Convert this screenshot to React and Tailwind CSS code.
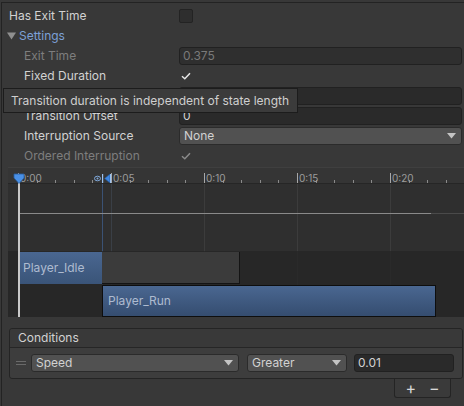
import React from "react";

const TICK = 18.6;
const ticks = Array.from({ length: 25 }, (_, i) => i);

const Check = ({ dim }) => (
    <svg width="10" height="8" viewBox="0 0 10 8" className="block">
        <path d="M1 4.2 L3.8 6.8 L9 1.2" fill="none" stroke={dim ? "#8a8a8a" : "#e6e6e6"} strokeWidth="1.5" />
    </svg>
);

const Row = ({ label, indent, dim, children }) => (
    <div className="flex h-5 items-center">
        <div className={`w-[170px] flex-none ${indent ? "pl-[15px]" : ""} ${dim ? "text-[#7e7e7e]" : ""}`}>{label}</div>
        <div className="flex-1 flex items-center">{children}</div>
    </div>
);

const Field = ({ value, dim }) => (
    <div className={`h-[18px] w-full rounded-[3px] border border-[#212121] bg-[#2a2a2a] px-[3px] flex items-center ${dim ? "text-[#7a7a7a] bg-[#2f2f2f]" : ""}`}>
        {value}
    </div>
);

const Box = ({ checked, dim }) => (
    <div className={`w-[14px] h-[14px] rounded-[2px] flex items-center justify-center ${checked ? "" : "border border-[#232323] bg-[#2e2e2e]"}`}>
        {checked && <Check dim={dim} />}
    </div>
);

const Arrow = () => (
    <svg width="9" height="6" viewBox="0 0 9 6"><path d="M0 0 H9 L4.5 5.5 Z" fill="#c4c4c4" /></svg>
);

const Dropdown = ({ value, className }) => (
    <div className={`h-[18px] rounded-[3px] border border-[#2b2b2b] bg-[#515151] pl-[4px] pr-[5px] flex items-center justify-between ${className}`}>
        <span>{value}</span>
        <Arrow />
    </div>
);

export default function App() {
    return (
        <div className="relative w-[464px] h-[406px] overflow-hidden bg-[#383838] text-[12px] text-[#d2d2d2] font-['Inter',sans-serif] leading-none">
            <div className="mt-[2px] ml-[1px] border-t border-l border-[#232323] h-[404px]">
                {/* inspector fields */}
                <div className="pt-[3px] pl-[7px] pr-[2px]">
                    <Row label="Has Exit Time">
                        <Box />
                    </Row>
                    <div className="flex h-5 items-center -ml-[2px] text-[#7ca0d6]">
                        <svg width="9" height="8" viewBox="0 0 9 8" className="mr-[3px]"><path d="M0 0.5 H9 L4.5 7.5 Z" fill="#8f8f8f" /></svg>
                        Settings
                    </div>
                    <Row label="Exit Time" indent dim>
                        <Field value="0.375" dim />
                    </Row>
                    <Row label="Fixed Duration" indent>
                        <Box checked />
                    </Row>
                    {/* transition duration row, covered by the tooltip */}
                    <Row label="" indent>
                        <Field value="" />
                    </Row>
                    <Row label="Transition Offset" indent>
                        <Field value="0" />
                    </Row>
                    <Row label="Interruption Source" indent>
                        <Dropdown value="None" className="w-full" />
                    </Row>
                    <Row label="Ordered Interruption" indent dim>
                        <Box checked dim />
                    </Row>
                </div>

                {/* timeline */}
                <div className="relative mt-[1px] ml-[6px] h-[150px] bg-[#2f2f2f] overflow-hidden">
                    <div className="relative h-[17px] bg-[#353535] border-t border-[#3f3f3f] border-b border-b-[#262626]">
                        {ticks.map((i) => {
                            const major = i % 5 === 0;
                            return (
                                <div
                                    key={i}
                                    className={`absolute bottom-0 w-px ${major ? "h-[10px] bg-[#a8a8a8]" : "h-[3px] bg-[#8a8a8a]"}`}
                                    style={{ left: 10 + i * TICK }}
                                />
                            );
                        })}
                        {["0:00", "0:05", "0:10", "0:15", "0:20"].map((t, i) => (
                            <span key={t} className="absolute top-[5px] text-[10px] text-[#9c9c9c]" style={{ left: 12 + i * 5 * TICK }}>
                                {t}
                            </span>
                        ))}
                    </div>

                    {/* grid lines behind the clips */}
                    {[2, 3, 4].map((m) => (
                        <div key={m} className="absolute top-[17px] bottom-0 w-px bg-[#3c3c3c]" style={{ left: 10 + m * 5 * TICK }} />
                    ))}
                    <div className="absolute top-[17px] bottom-0 w-px bg-[#3a3f46]" style={{ left: 10 + 5 * TICK }} />
                    <div className="absolute top-[17px] bottom-0 left-[94px] w-px bg-[#3b5274]" />

                    <div className="relative h-[67px]">
                        <div className="absolute top-[29px] left-[10px] w-[413px] h-px bg-[#8a8a8a]" />
                        <div className="absolute top-[29px] left-[423px] w-[40px] h-px bg-[#4a4a4a]" />
                    </div>
                    <div className="relative h-[66px] bg-[#262626]/80 pt-px">
                        <div className="flex h-[33px] pl-[10px]">
                            <div className="relative w-[84px] h-[32px] bg-gradient-to-b from-[#4a6791] to-[#3a5478] flex items-center pl-[5px] text-[#aebbd0]">Player_Idle</div>
                            <div className="relative w-[138px] h-[32px] bg-[#3b3b3b] border-r border-b border-[#141414]" />
                        </div>
                        <div className="flex h-[32px] pl-[94px]">
                            <div className="relative w-[334px] h-[32px] bg-gradient-to-b from-[#4a6791] to-[#354d70] border border-[#0e0e0e] flex items-center pl-[5px] text-[#aebbd0]">Player_Run</div>
                        </div>
                    </div>

                    {/* playhead and markers */}
                    <div className="absolute top-[10px] bottom-0 left-[10px] w-[2px] bg-[#c8c8c8]" />
                    <svg className="absolute top-[6px] left-[5px]" width="12" height="11" viewBox="0 0 12 11">
                        <path d="M1 1 H11 V5 L6 10.5 L1 5 Z" fill="#4a90e6" stroke="#2a5ea0" strokeWidth="0.8" />
                    </svg>
                    <svg className="absolute top-[6px] left-[86px]" width="18" height="11" viewBox="0 0 18 11">
                        <ellipse cx="3.5" cy="5.5" rx="3" ry="2.3" fill="none" stroke="#7fa8da" strokeWidth="1" />
                        <circle cx="3.5" cy="5.5" r="1" fill="#7fa8da" />
                        <rect x="8" y="1" width="1.2" height="9" fill="#9cc2f0" />
                        <path d="M16 1 V10 L10.5 5.5 Z" fill="#3f86e0" stroke="#1d4f8f" strokeWidth="0.6" />
                        <rect x="16" y="1" width="1.2" height="9" fill="#9cc2f0" />
                    </svg>
                </div>

                {/* conditions */}
                <div className="mt-[11px] ml-[7px] mr-[1px] rounded-[3px] border border-[#242424]">
                    <div className="h-[19px] flex items-center pl-[8px] bg-[#393939] border-b border-[#262626] rounded-t-[3px]">Conditions</div>
                    <div className="h-[30px] flex items-center bg-[#3d3d3d] rounded-b-[3px] pr-[8px]">
                        <div className="w-[21px] flex flex-col items-center gap-[2px] pl-[1px]">
                            <div className="w-[10px] h-px bg-[#6a6a6a]" />
                            <div className="w-[10px] h-px bg-[#6a6a6a]" />
                        </div>
                        <Dropdown value="Speed" className="w-[208px]" />
                        <Dropdown value="Greater" className="w-[100px] ml-[8px]" />
                        <div className="ml-[7px] flex-1 h-[18px] rounded-[3px] border border-[#212121] bg-[#2a2a2a] pl-[3px] flex items-center">0.01</div>
                    </div>
                </div>
                <div className="flex justify-end mr-[13px]">
                    <div className="w-[57px] h-[19px] border border-t-0 border-[#242424] rounded-b-[3px] bg-[#3a3a3a] flex items-center justify-center gap-[13px] text-[16px] text-[#d8d8d8]">
                        <span>+</span>
                        <span>−</span>
                    </div>
                </div>
            </div>

            {/* tooltip */}
            <div className="absolute left-[3px] top-[88px] w-[295px] h-[25px] border border-[#1c1c1c] bg-[#3b3b3b] flex items-center pl-[7px] text-[#cfcfcf]">
                Transition duration is independent of state length
            </div>
        </div>
    );
}
